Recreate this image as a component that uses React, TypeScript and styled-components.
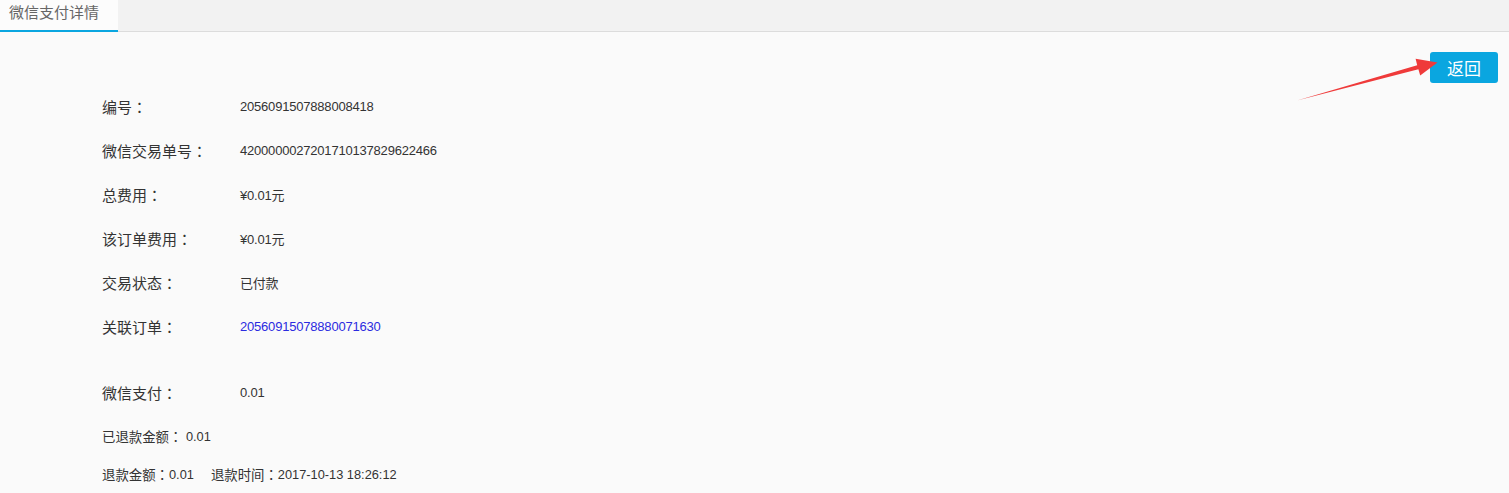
import styled, { createGlobalStyle } from "styled-components";

const GlobalStyle = createGlobalStyle`
  html, body {
    margin: 0;
    padding: 0;
    background: #fafafa;
  }
  body {
    font-family: "Liberation Sans", Arial, "Noto Sans CJK SC", sans-serif;
    color: #333;
  }
`;

const Page = styled.div`
  position: relative;
  min-height: 493px;
  background: #fafafa;
`;

const TabBar = styled.nav`
  height: 31px;
  display: flex;
  background: #f2f2f2;
  border-bottom: 1px solid #dcdcdc;
`;

const Tab = styled.div<{ $active?: boolean }>`
  width: 118px;
  height: 32px;
  box-sizing: border-box;
  padding: 2px 0 0 9px;
  font-size: 15px;
  line-height: 20px;
  color: #666;
  font-family: "Noto Sans CJK SC", sans-serif;
  background: ${(p) => (p.$active ? "#fcfcfc" : "transparent")};
  border-bottom: 2px solid ${(p) => (p.$active ? "#0aa6e0" : "transparent")};
`;

const Content = styled.main`
  padding: 20px 11px 0 102px;
`;

const Toolbar = styled.div`
  display: flex;
  justify-content: flex-end;
  height: 32px;
`;

const BackButton = styled.button`
  width: 68px;
  height: 31px;
  border: none;
  border-radius: 3px;
  background: #0aa6e0;
  color: #fff;
  font-size: 17px;
  font-family: "Noto Sans CJK SC", sans-serif;
  padding: 0;
  cursor: pointer;
`;

const DetailList = styled.dl`
  margin: 0;
`;

const Row = styled.div`
  display: flex;
  align-items: center;
  height: 44px;
`;

const Label = styled.dt`
  width: 138px;
  font-size: 15px;
  font-family: "Noto Sans CJK SC", sans-serif;
  color: #333;
`;

// full-width colon centred in its cell, as in the original font
const Colon = styled.span`
  font-family: "Noto Sans CJK TC", sans-serif;
`;

const Value = styled.dd<{ $link?: boolean }>`
  margin: 0;
  font-size: 13px;
  letter-spacing: -0.2px;
  color: ${(p) => (p.$link ? "#2b2be0" : "#333")};
`;

const Spacer = styled.div`
  height: 22px;
`;

const Line = styled.div<{ $h: number }>`
  display: flex;
  align-items: center;
  height: ${(p) => p.$h}px;
  font-size: 12.8px;
  color: #333;
  white-space: pre;
`;

const Cjk = styled.span`
  font-family: "Noto Sans CJK SC", sans-serif;
  font-size: 13.4px;
`;

const Gap = styled.span`
  display: inline-block;
  width: 17px;
`;

const ArrowLayer = styled.svg`
  position: absolute;
  left: 0;
  top: 0;
  pointer-events: none;
`;

const rows: { label: string; value: string; link?: boolean }[] = [
  { label: "编号", value: "2056091507888008418" },
  { label: "微信交易单号", value: "4200000027201710137829622466" },
  { label: "总费用", value: "¥0.01元" },
  { label: "该订单费用", value: "¥0.01元" },
  { label: "交易状态", value: "已付款" },
  { label: "关联订单", value: "20560915078880071630", link: true },
];

export default function App() {
  return (
    <Page>
      <GlobalStyle />
      <TabBar>
        <Tab $active>微信支付详情</Tab>
      </TabBar>
      <Content>
        <Toolbar>
          <BackButton>返回</BackButton>
        </Toolbar>
        <DetailList>
          {rows.map((r) => (
            <Row key={r.label}>
              <Label>
                {r.label}
                <Colon>：</Colon>
              </Label>
              <Value $link={r.link}>{r.value}</Value>
            </Row>
          ))}
          <Spacer />
          <Row>
            <Label>
              微信支付<Colon>：</Colon>
            </Label>
            <Value>0.01</Value>
          </Row>
        </DetailList>
        <Line $h={44}>
          <Cjk>
            已退款金额<Colon>：</Colon>
          </Cjk>
          {" 0.01"}
        </Line>
        <Line $h={32}>
          <Cjk>
            退款金额<Colon>：</Colon>
          </Cjk>
          0.01
          <Gap />
          <Cjk>
            退款时间<Colon>：</Colon>
          </Cjk>
          2017-10-13 18:26:12
        </Line>
      </Content>
      <ArrowLayer width={1509} height={493} viewBox="0 0 1509 493">
        <polygon
          points="1297,100.5 1417.2,65.3 1415.6,58.8 1437.5,62.5 1420.2,75.6 1418.4,69.3"
          fill="#ef3a3a"
        />
      </ArrowLayer>
    </Page>
  );
}
